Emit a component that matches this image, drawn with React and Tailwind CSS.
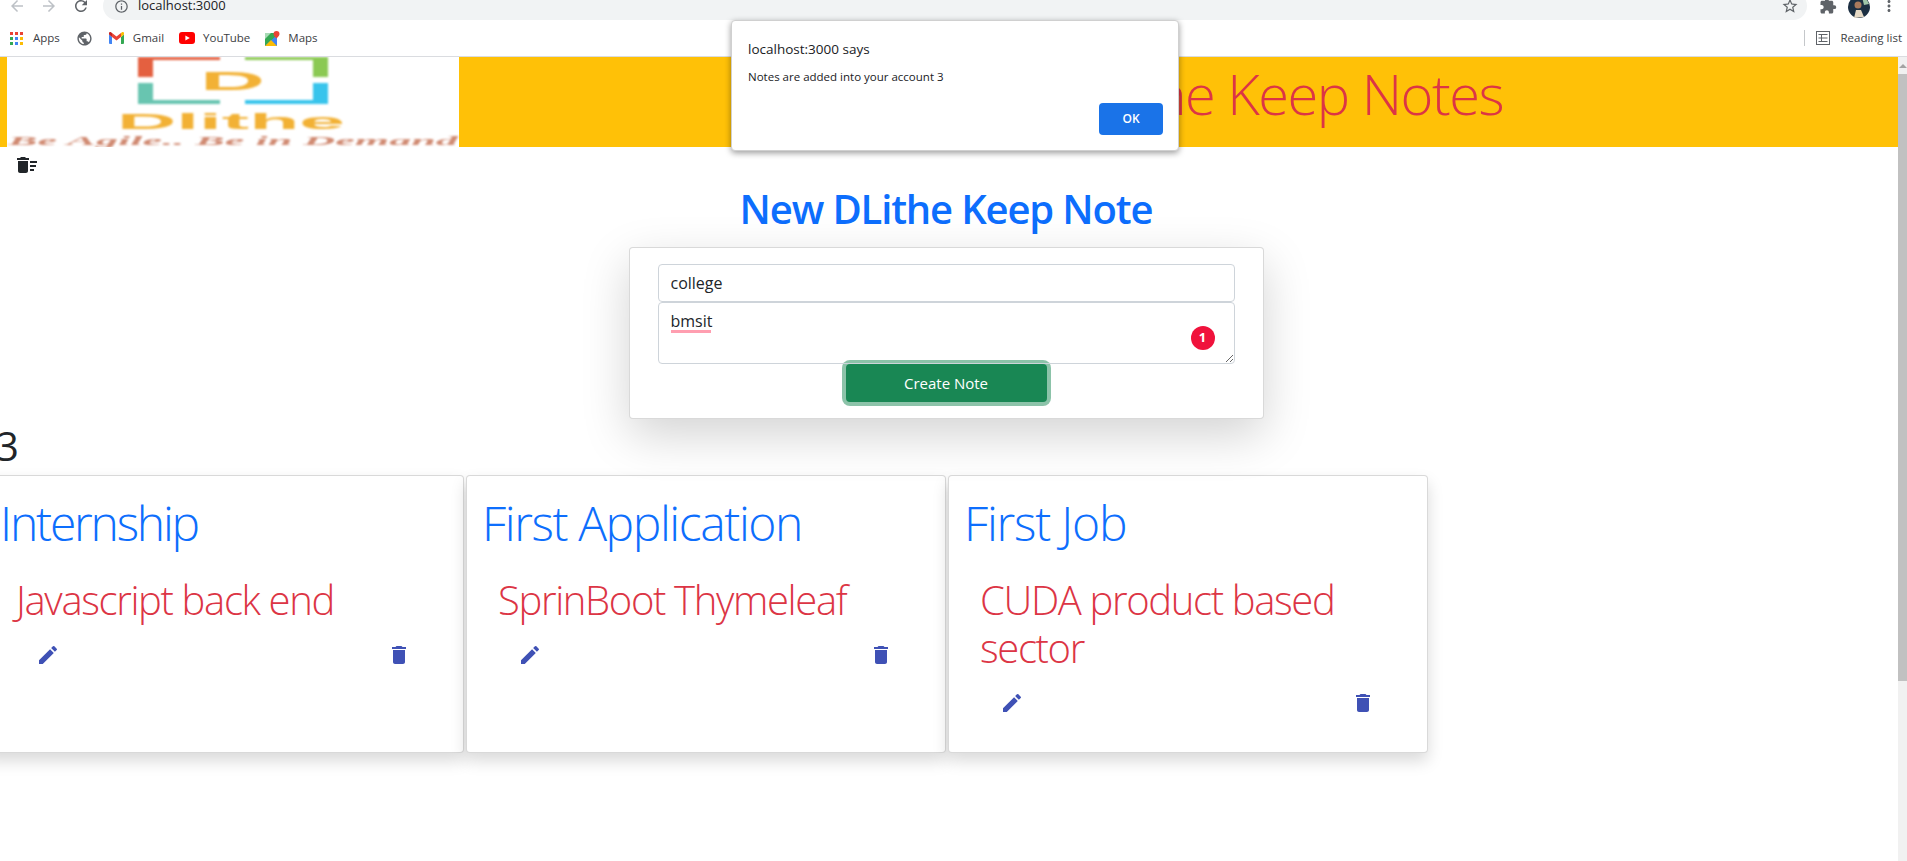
import {
  MdArrowBack,
  MdArrowForward,
  MdRefresh,
  MdInfoOutline,
  MdStarBorder,
  MdExtension,
  MdMoreVert,
  MdPublic,
  MdDeleteSweep,
  MdEdit,
  MdDelete,
} from 'react-icons/md'

const notes = [
  { title: 'Internship', body: 'Javascript back end', titleClass: 'tracking-[-2.2px]' },
  { title: 'First Application', body: 'SprinBoot Thymeleaf', titleClass: 'tracking-[-1.4px]' },
  { title: 'First Job', body: 'CUDA product based sector', titleClass: 'tracking-[-1.2px]' },
]

function AppsIcon() {
  const colors = ['#ea4335', '#ea4335', '#ea4335', '#34a853', '#4285f4', '#fbbc05', '#34a853', '#4285f4', '#fbbc05']
  return (
    <div className="grid grid-cols-3 gap-[2px] w-[13px] h-[13px]">
      {colors.map((c, i) => (
        <span key={i} className="w-[3px] h-[3px]" style={{ backgroundColor: c }} />
      ))}
    </div>
  )
}

function GmailIcon() {
  return (
    <svg width="15" height="12" viewBox="0 0 15 12">
      <path d="M0 2.500V11a1 1 0 0 0 1 1h2V5z" fill="#4285f4" />
      <path d="M15 2.500V11a1 1 0 0 1-1 1h-2V5z" fill="#34a853" />
      <path d="M12 1v4l3-2.500V1.200C15 .2 13.800-.3 13 .3z" fill="#fbbc05" />
      <path d="M3 5V1l4.500 3.500L12 1v4L7.500 8.500z" fill="#ea4335" />
      <path d="M0 1.200v1.300L3 5V1L2 .3C1.200-.3 0 .2 0 1.200z" fill="#c5221f" />
    </svg>
  )
}

function YouTubeIcon() {
  return (
    <svg width="16" height="12" viewBox="0 0 16 12">
      <rect width="16" height="12" rx="3" fill="#f00" />
      <path d="M6.400 3.400v5.200L10.800 6z" fill="#fff" />
    </svg>
  )
}

function MapsIcon() {
  return (
    <svg width="15" height="15" viewBox="0 0 15 15">
      <rect y="2" width="12" height="13" fill="#34a853" />
      <path d="M0 15 12 4v11z" fill="#4285f4" />
      <path d="M0 15l6-6 6 6z" fill="#fbbc05" />
      <path d="M0 2h6L0 8z" fill="#a8dab5" />
      <path d="M11.500 0a3 3 0 0 0-3 3c0 2 3 4.500 3 4.500s3-2.500 3-4.500a3 3 0 0 0-3-3z" fill="#ea4335" />
    </svg>
  )
}

function ReadingListIcon() {
  return (
    <svg width="14" height="14" viewBox="0 0 14 14" fill="none" stroke="#5f6368" strokeWidth="1">
      <rect x="0.500" y="0.500" width="13" height="13" />
      <path d="M2.500 3.500h9M2.500 7h9M2.500 10.500h9M5.500 3v8" />
    </svg>
  )
}

function Avatar() {
  return (
    <svg width="22" height="22" viewBox="0 0 22 22" className="mt-[2px]">
      <circle cx="11" cy="11" r="11" fill="#1c2f42" />
      <path d="M14 1a11 11 0 0 1 7 7l-5 1z" fill="#9fc5a8" />
      <circle cx="10" cy="9" r="3.500" fill="#a9795c" />
      <path d="M6 22l2-8h5l3 7z" fill="#e5d9c5" />
    </svg>
  )
}

function Bookmark({ icon, label, className }) {
  return (
    <div className={`flex items-center ${className}`}>
      {icon}
      {label}
    </div>
  )
}

function BrowserBar() {
  return (
    <div className="bg-white border-b border-[#dadce0] h-[57px] text-[#3c4043] text-[11.500px]">
      <div className="h-[20px] overflow-hidden">
        <div className="flex items-center h-[28px] -mt-[8px] text-[#5f6368]">
          <MdArrowBack className="ml-[8px] text-[#bdc1c6]" size={18} />
          <MdArrowForward className="ml-[14px] text-[#bdc1c6]" size={18} />
          <MdRefresh className="ml-[14px]" size={18} />
          <div className="ml-[13px] w-[1704px] h-[28px] pl-[11px] pr-[8px] bg-[#f1f3f4] rounded-[14px] flex items-center">
            <MdInfoOutline size={15} />
            <span className="ml-[9px] text-[13px] text-[#202124]">localhost:3000</span>
            <MdStarBorder className="ml-auto" size={18} />
          </div>
          <MdExtension className="ml-[12px]" size={18} />
          <div className="ml-[11px]"><Avatar /></div>
          <MdMoreVert className="ml-[10px]" size={18} />
        </div>
      </div>
      <div className="h-[36px] flex items-center">
        <div className="ml-[10px]"><AppsIcon /></div>
        <Bookmark label="Apps" className="ml-[10px]" />
        <Bookmark icon={<MdPublic size={17} className="text-[#5f6368]" />} className="ml-[16px]" />
        <Bookmark icon={<GmailIcon />} label={<span className="ml-[9px]">Gmail</span>} className="ml-[16px]" />
        <Bookmark icon={<YouTubeIcon />} label={<span className="ml-[8px]">YouTube</span>} className="ml-[15px]" />
        <Bookmark icon={<MapsIcon />} label={<span className="ml-[8px]">Maps</span>} className="ml-[15px]" />
        <div className="ml-auto w-px h-[16px] bg-[#c4c7ca]" />
        <Bookmark icon={<ReadingListIcon />} label={<span className="ml-[10px]">Reading list</span>} className="ml-[11px] mr-[5px]" />
      </div>
    </div>
  )
}

function Logo() {
  return (
    <svg className="block w-[452px] h-[90px] bg-white shrink-0" viewBox="0 0 452 90">
      <defs>
        <filter id="soft"><feGaussianBlur stdDeviation="0.800" /></filter>
        <filter id="softer"><feGaussianBlur stdDeviation="1" /></filter>
      </defs>
      <g filter="url(#soft)">
        <path d="M131 0h82v3h-67v17h-15z" fill="#e4603f" />
        <path d="M238 0h83v20h-15V3h-68z" fill="#8bc953" />
        <path d="M131 26h15v17h67v4h-82z" fill="#68c5b0" />
        <path d="M306 26h15v21h-83v-4h68z" fill="#38c4ec" />
        <text x="193" y="33" fontSize="26" fontWeight="700" fill="#f2b134" textLength="65" lengthAdjust="spacingAndGlyphs" fontFamily="Liberation Sans, sans-serif">D</text>
        <text x="110" y="72" fontSize="22" fontWeight="700" fill="#f2b134" textLength="228" lengthAdjust="spacingAndGlyphs" fontFamily="Liberation Sans, sans-serif">Dlithe</text>
      </g>
      <text x="1" y="88" fontSize="12" fontWeight="700" fontStyle="italic" fill="#d08a72" filter="url(#softer)" textLength="450" lengthAdjust="spacingAndGlyphs" fontFamily="Liberation Serif, serif">Be Agile.. Be in Demand</text>
    </svg>
  )
}

function NoteCard({ title, body, titleClass }) {
  return (
    <div className="w-[480px] h-[278px] shrink-0 bg-white border border-black/15 rounded-[4px] shadow-[0_0.5rem_1rem_rgba(0,0,0,0.15)] pl-[15px] pr-4 pt-[18px]">
      <h2 className={`text-[48px] leading-[58px] font-light text-[#0d6efd] whitespace-nowrap ${titleClass}`}>{title}</h2>
      <p className="mt-[24px] pl-[16px] pr-[40px] text-[40px] leading-[48px] font-light text-[#dc3545] tracking-[-1.350px]">{body}</p>
      <div className="flex justify-between mt-[19px] pl-[36px] pr-[36px] text-[#3f51b5]">
        <MdEdit size={24} />
        <MdDelete size={24} />
      </div>
    </div>
  )
}

function NoteForm() {
  return (
    <div className="relative w-[635px] mx-auto mt-[14px] -translate-x-[3px] bg-white border border-black/15 rounded-[4px] shadow-[0_1rem_3rem_rgba(0,0,0,0.175)] px-[28px] pt-[16px] pb-[16px]">
      <input
        readOnly
        value="college"
        className="block w-full h-[38px] px-3 text-[16px] text-[#212529] bg-white border border-[#ced4da] rounded-[4px] outline-none"
      />
      <div className="relative z-10 h-[62px]">
        <textarea
          readOnly
          spellCheck={false}
          value="bmsit"
          className="block w-full h-[62px] px-3 py-[6px] text-[16px] leading-[24px] text-[#212529] bg-transparent border border-[#ced4da] rounded-[4px] outline-none"
        />
        <span className="absolute left-[13px] top-[28px] w-[40px] h-[3px] bg-[#ff9eb0]" />
        <span className="absolute right-[20px] top-[24px] w-[24px] h-[24px] rounded-full bg-[#f0123c] text-white text-[13px] font-bold flex items-center justify-center">1</span>
      </div>
      <div className="flex justify-center">
        <button className="w-[201px] h-[38px] bg-[#198754] text-white text-[15px] rounded-[4px] shadow-[0_0_0_4px_rgba(25,135,84,0.5)]">
          Create Note
        </button>
      </div>
    </div>
  )
}

function AlertBox() {
  return (
    <div className="absolute left-[731px] top-[20px] w-[448px] h-[131px] bg-white rounded-[4px] border border-[#d0d0d0] shadow-[0_2px_6px_rgba(0,0,0,0.4)] text-[#202124] z-20">
      <p className="absolute left-[16px] top-[18px] text-[13.500px] leading-[20px]">localhost:3000 says</p>
      <p className="absolute left-[16px] top-[47px] text-[11.500px] leading-[18px]">Notes are added into your account 3</p>
      <button className="absolute right-[15px] top-[82px] w-[64px] h-[32px] bg-[#1a73e8] text-white text-[12px] font-semibold rounded-[4px]">OK</button>
    </div>
  )
}

export default function App() {
  return (
    <div className="relative h-[861px] overflow-hidden bg-white font-['Open_Sans',sans-serif]">
      <BrowserBar />
      <div className="flex h-[804px]">
        <main className="w-[1898px] overflow-hidden">
          <div className="h-[90px] bg-[#ffc107] pl-[7px] flex">
            <Logo />
            <div className="flex-1 flex items-center justify-end pr-[395px] pb-[18px] text-[56px] font-light text-[#dc3545] tracking-[-1.5px]">
              Dlithe Keep Notes
            </div>
          </div>
          <div className="h-[24px] mt-[6px] ml-[15px] text-[#212529]">
            <MdDeleteSweep size={24} />
          </div>
          <h1 className="mt-[8px] h-[48px] text-center text-[40px] leading-[48px] font-semibold text-[#0d6efd] -translate-x-[3px] tracking-[-1.150px]">
            New DLithe Keep Note
          </h1>
          <NoteForm />
          <div className="mt-[3px] -ml-[4px] h-[53px] text-[40px] leading-[48px] text-[#212529]">3</div>
          <div className="flex gap-[2px] -ml-[16px]">
            {notes.map((n) => (
              <NoteCard key={n.title} title={n.title} body={n.body} titleClass={n.titleClass} />
            ))}
          </div>
        </main>
        <div className="w-[9px] bg-[#f1f1f1] flex flex-col">
          <div className="h-[17px] flex justify-center items-center">
            <span className="w-0 h-0 border-x-[4px] border-x-transparent border-b-[4px] border-b-[#a3a3a3]" />
          </div>
          <div className="h-[607px] bg-[#c1c1c1]" />
        </div>
      </div>
      <AlertBox />
    </div>
  )
}
